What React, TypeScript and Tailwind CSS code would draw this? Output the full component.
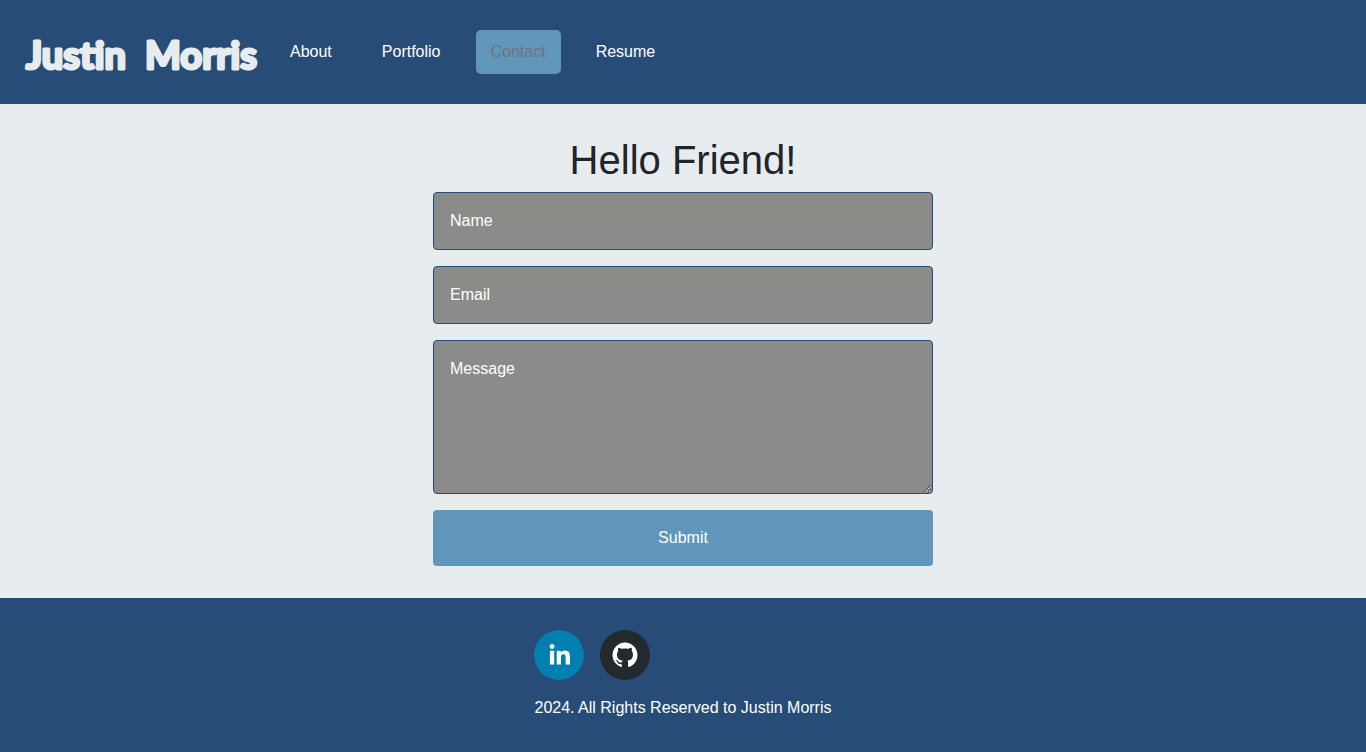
const LINKS = [
  { label: "About", href: "#about", active: false },
  { label: "Portfolio", href: "#portfolio", active: false },
  { label: "Contact", href: "#contact", active: true },
  { label: "Resume", href: "#resume", active: false },
];

const SOCIALS = [
  {
    label: "LinkedIn",
    href: "#linkedin",
    color: "#007fb1",
    path: "M20.4,44h5.4V26.6h-5.4V44z M23.1,18c-1.7,0-3.1,1.4-3.1,3.1c0,1.7,1.4,3.1,3.1,3.1 c1.7,0,3.1-1.4,3.1-3.1C26.2,19.4,24.8,18,23.1,18z M39.5,26.2c-2.6,0-4.4,1.4-5.1,2.8h-0.1v-2.4h-5.2V44h5.4v-8.6 c0-2.3,0.4-4.5,3.2-4.5c2.8,0,2.8,2.6,2.8,4.6V44H46v-9.5C46,29.8,45,26.2,39.5,26.2z",
  },
  {
    label: "GitHub",
    href: "#github",
    color: "#24292e",
    path: "M32,16c-8.8,0-16,7.2-16,16c0,7.1,4.6,13.1,10.9,15.2 c0.8,0.1,1.1-0.3,1.1-0.8c0-0.4,0-1.4,0-2.7c-4.5,1-5.4-2.1-5.4-2.1c-0.7-1.8-1.8-2.3-1.8-2.3c-1.5-1,0.1-1,0.1-1 c1.6,0.1,2.5,1.6,2.5,1.6c1.4,2.4,3.7,1.7,4.7,1.3c0.1-1,0.6-1.7,1-2.1c-3.6-0.4-7.3-1.8-7.3-7.9c0-1.7,0.6-3.2,1.6-4.3 c-0.2-0.4-0.7-2,0.2-4.2c0,0,1.3-0.4,4.4,1.6c1.3-0.4,2.6-0.5,4-0.5c1.4,0,2.7,0.2,4,0.5c3.1-2.1,4.4-1.6,4.4-1.6 c0.9,2.2,0.3,3.8,0.2,4.2c1,1.1,1.6,2.5,1.6,4.3c0,6.1-3.7,7.5-7.3,7.9c0.6,0.5,1.1,1.5,1.1,3c0,2.1,0,3.9,0,4.4 c0,0.4,0.3,0.9,1.1,0.8C43.4,45.1,48,39.1,48,32C48,23.2,40.8,16,32,16z",
  },
];

const FIELD =
  "block w-full rounded border border-[#274c77] bg-[#8b8c89] p-4 text-base text-white placeholder:text-white placeholder:opacity-100";

function Wordmark() {
  return (
    <svg
      viewBox="0 0 240 48"
      className="h-12 w-60 font-['Lato',sans-serif] text-[38px] font-bold"
      fill="#e7ecef"
      stroke="#e7ecef"
      strokeWidth="3"
      strokeLinejoin="round"
      strokeLinecap="round"
    >
      <text x="2" y="41">
        Justin <tspan x="121">Morris</tspan>
      </text>
    </svg>
  );
}

function Header() {
  return (
    <header className="flex h-[104px] items-center bg-[#274c77] px-6">
      <a href="#home" className="mr-[11px] shrink-0">
        <Wordmark />
      </a>
      <nav>
        <ul className="flex gap-5">
          {LINKS.map((link) => (
            <li key={link.label}>
              <a
                href={link.href}
                aria-current={link.active ? "page" : undefined}
                className={
                  link.active
                    ? "block rounded-[5px] bg-[#6096ba] px-[15px] py-2.5 text-[#6c757d]"
                    : "block rounded-[5px] px-[15px] py-2.5 text-white"
                }
              >
                {link.label}
              </a>
            </li>
          ))}
        </ul>
      </nav>
    </header>
  );
}

function ContactForm() {
  return (
    <form className="flex w-full max-w-[500px] flex-col gap-4" onSubmit={(e) => e.preventDefault()}>
      <input type="text" aria-label="Name" placeholder="Name" className={`${FIELD} h-[58px]`} />
      <input type="email" aria-label="Email" placeholder="Email" className={`${FIELD} h-[58px]`} />
      <textarea aria-label="Message" placeholder="Message" rows={5} className={FIELD} />
      <button type="submit" className="w-full rounded bg-[#6096ba] p-4 text-center text-white">
        Submit
      </button>
    </form>
  );
}

function Footer() {
  return (
    <footer className="flex justify-center bg-[#274c77] py-8 text-white">
      <div>
        <div className="mb-4 flex gap-4">
          {SOCIALS.map((social) => (
            <a key={social.label} href={social.href} aria-label={social.label} className="block size-[50px]">
              <svg viewBox="0 0 64 64" className="size-full" aria-hidden="true">
                <circle cx="32" cy="32" r="32" fill={social.color} />
                <path d={social.path} fill="#ffffff" />
              </svg>
            </a>
          ))}
        </div>
        <p>2024. All Rights Reserved to Justin Morris</p>
      </div>
    </footer>
  );
}

export default function App() {
  return (
    <div className="flex min-h-screen flex-col bg-[#e7ecef] font-['Liberation_Sans',Arial,sans-serif] text-base text-[#212529]">
      <Header />
      <main className="flex flex-1 flex-col items-center px-4 py-8">
        <h1 className="mb-2 text-[40px] leading-[48px]">Hello Friend!</h1>
        <ContactForm />
      </main>
      <Footer />
    </div>
  );
}
